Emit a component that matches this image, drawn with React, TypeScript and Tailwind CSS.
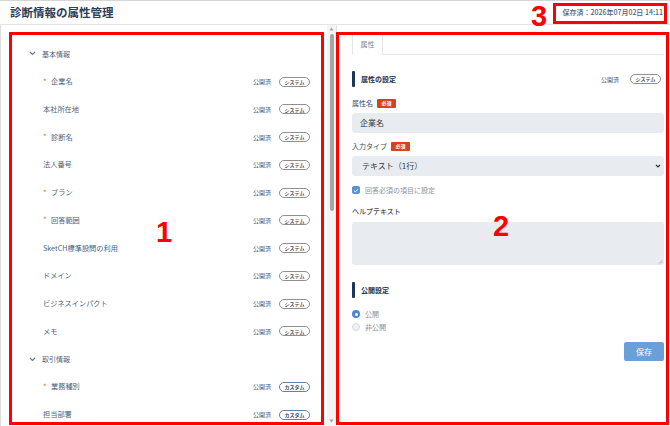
import * as React from "react";

type Attr = {
  name: string;
  required?: boolean;
  custom?: boolean;
};

type Group = {
  title: string;
  items: Attr[];
};

const groups: Group[] = [
  {
    title: "基本情報",
    items: [
      { name: "企業名", required: true },
      { name: "本社所在地" },
      { name: "診断名", required: true },
      { name: "法人番号" },
      { name: "プラン", required: true },
      { name: "回答範囲", required: true },
      { name: "SketCH標準設問の利用" },
      { name: "ドメイン" },
      { name: "ビジネスインパクト" },
      { name: "メモ" },
    ],
  },
  {
    title: "取引情報",
    items: [
      { name: "業務種別", required: true, custom: true },
      { name: "担当部署", custom: true },
    ],
  },
];

function Chevron() {
  return (
    <svg width="7" height="5" viewBox="0 0 7 5" className="text-[#6b7a90]">
      <path d="M1 1l2.5 2.5L6 1" fill="none" stroke="currentColor" strokeWidth="1.2" />
    </svg>
  );
}

function KindBadge({ custom }: { custom?: boolean }) {
  return custom ? (
    <span className="flex h-[10px] w-[31px] items-center justify-center rounded-full border border-[#5f7fae] bg-white text-[5px] font-bold text-[#2c4a7a]">
      カスタム
    </span>
  ) : (
    <span className="flex h-[10px] w-[31px] items-center justify-center rounded-full border border-[#8f8f8f] bg-white text-[5px] font-bold text-[#555]">
      システム
    </span>
  );
}

function RequiredTag() {
  return (
    <span className="ml-[4px] flex h-[9px] w-[19px] items-center justify-center rounded-[1px] bg-[#d4431a] text-[5px] font-bold text-white">
      必須
    </span>
  );
}

function SectionHeading({ title, right }: { title: string; right?: boolean }) {
  return (
    <div className="flex h-[16px] items-center pr-[3px]">
      <span className="h-[16px] w-[3px] rounded-[1px] bg-[#1f3458]" />
      <span className="ml-[6px] flex-1 text-[7px] font-bold text-[#1e2f4d]">{title}</span>
      {right && (
        <div className="flex items-center gap-[11px]">
          <span className="text-[6px] text-[#3d5272]">公開済</span>
          <KindBadge />
        </div>
      )}
    </div>
  );
}

function AttributeList() {
  return (
    <div className="flex-1 overflow-hidden pt-[15px] pr-[17px]">
      {groups.map((g) => (
        <div key={g.title}>
          <div className="flex h-[27.75px] items-center gap-[6px] pl-[28px]">
            <Chevron />
            <span className="text-[7px] text-[#4d5f7d]">{g.title}</span>
          </div>
          {g.items.map((it) => (
            <div key={it.name} className="flex h-[27.75px] items-center pl-[42px]">
              {it.required && <span className="w-[8px] text-[8px] leading-none text-[#e0703a]">*</span>}
              <span className="flex-1 text-[7.2px] text-[#4d5f7d]">{it.name}</span>
              <span className="mr-[8px] text-[6px] text-[#3d5272]">公開済</span>
              <KindBadge custom={it.custom} />
            </div>
          ))}
        </div>
      ))}
    </div>
  );
}

function FakeScrollbar() {
  return (
    <div className="flex w-[9px] flex-col items-center bg-[#f4f4f4]">
      <svg width="5" height="4" viewBox="0 0 5 4" className="mt-[2px]">
        <path d="M2.5 0.5L4.5 3.5H0.5z" fill="#a3a3a3" />
      </svg>
      <div className="mt-[3px] h-[177px] w-[4px] rounded-full bg-[#a6a6a6]" />
      <div className="flex-1" />
      <svg width="5" height="4" viewBox="0 0 5 4" className="mb-[3px]">
        <path d="M0.5 0.5H4.5L2.5 3.5z" fill="#a3a3a3" />
      </svg>
    </div>
  );
}

function AttributeForm() {
  return (
    <div className="flex flex-1 flex-col pl-[15px] pr-[6px] pt-[9px]">
      {/* tab strip */}
      <div className="flex h-[21px] border-b border-[#e6e6e6]">
        <div className="-mb-px flex w-[31px] items-center justify-center border border-b-white border-[#e6e6e6] bg-white text-[7px] text-[#7d8593]">
          属性
        </div>
      </div>

      <div className="mt-[16px]">
        <SectionHeading title="属性の設定" right />
      </div>

      <div className="mt-[11px] flex h-[10px] items-center">
        <span className="text-[7px] text-[#3e4b5f]">属性名</span>
        <RequiredTag />
      </div>
      <div className="mt-[5px] flex h-[20px] items-center rounded-[3px] bg-[#e8ebef] pl-[8px] text-[8px] text-[#333a45]">
        企業名
      </div>

      <div className="mt-[8px] flex h-[10px] items-center">
        <span className="text-[7px] text-[#3e4b5f]">入力タイプ</span>
        <RequiredTag />
      </div>
      <div className="mt-[5px] flex h-[20px] items-center justify-between rounded-[3px] bg-[#e8ebef] pl-[10px] pr-[3px] text-[8px] text-[#333a45]">
        <span>テキスト（1行）</span>
        <svg width="6" height="4" viewBox="0 0 6 4">
          <path d="M1 1l2 2 2-2" fill="none" stroke="#2d3748" strokeWidth="1.2" />
        </svg>
      </div>

      <div className="mt-[10px] flex h-[8px] items-center">
        <span className="flex h-[8px] w-[8px] items-center justify-center rounded-[2px] bg-[#5c8fd4]">
          <svg width="6" height="5" viewBox="0 0 6 5">
            <path d="M1 2.6l1.4 1.3L5 1.2" fill="none" stroke="white" strokeWidth="1" />
          </svg>
        </span>
        <span className="ml-[5px] text-[7px] text-[#8a93a1]">回答必須の項目に設定</span>
      </div>

      <div className="mt-[12px] flex h-[10px] items-center text-[7px] font-medium text-[#4a4f57]">
        ヘルプテキスト
      </div>
      <div className="relative mt-[6px] h-[43px] rounded-[3px] bg-[#e8ebef]">
        <svg width="5" height="5" viewBox="0 0 5 5" className="absolute bottom-[1px] right-[1px]">
          <path d="M4.5 1L1 4.5M4.5 3L3 4.5" stroke="#9aa0a8" strokeWidth="0.7" />
        </svg>
      </div>

      <div className="mt-[17px]">
        <SectionHeading title="公開設定" />
      </div>

      <div className="mt-[12px] flex h-[8px] items-center">
        <span className="flex h-[8px] w-[8px] items-center justify-center rounded-full bg-[#4a86d0]">
          <span className="h-[3px] w-[3px] rounded-full bg-white" />
        </span>
        <span className="ml-[5px] text-[7px] text-[#8a93a1]">公開</span>
      </div>
      <div className="mt-[5px] flex h-[8px] items-center">
        <span className="h-[8px] w-[8px] rounded-full border border-[#d5d9df] bg-[#eef0f3]" />
        <span className="ml-[5px] text-[7px] text-[#8a93a1]">非公開</span>
      </div>

      <div className="mt-[11px] flex justify-end">
        <button className="flex h-[19px] w-[40px] items-center justify-center rounded-[2px] bg-[#6a9fd8] text-[8px] text-white">
          保存
        </button>
      </div>
    </div>
  );
}

export default function App() {
  return (
    <div className="relative h-[426px] w-[670px] overflow-hidden border-t border-[#d6d6d6] bg-white font-['Noto_Sans_CJK_JP','Noto_Sans',sans-serif]">
      <header className="flex h-[24px] items-center justify-between border-b border-[#e4e4e4] pl-[10px] pr-[7px]">
        <h1 className="text-[11.5px] font-bold text-[#2c3e5c]">診断情報の属性管理</h1>
        <span className="text-[7px] font-medium text-[#4b5f7f]">保存済：2026年07月02日 14:11</span>
      </header>

      <div className="flex h-[401px]">
        <div className="flex w-[336px] border-l border-[#dcdcdc]">
          <AttributeList />
          <FakeScrollbar />
        </div>
        <div className="flex flex-1 border-l border-[#e4e4e4]">
          <AttributeForm />
        </div>
      </div>

      {/* numbered callouts */}
      <div className="pointer-events-none absolute left-[9px] top-[31px] h-[393px] w-[315px] border-[3px] border-[#ff0000]" />
      <div className="pointer-events-none absolute left-[336px] top-[31px] h-[393px] w-[333px] border-[3px] border-[#ff0000]" />
      <div className="pointer-events-none absolute left-[553px] top-[2px] h-[21px] w-[114px] border-[3px] border-[#ff0000]" />
      <span className="pointer-events-none absolute left-[531px] top-[1px] font-['Liberation_Sans',sans-serif] text-[29px] font-bold leading-none text-[#ff0000]">
        3
      </span>
      <span className="pointer-events-none absolute left-[156px] top-[217px] font-['Liberation_Sans',sans-serif] text-[29px] font-bold leading-none text-[#ff0000]">
        1
      </span>
      <span className="pointer-events-none absolute left-[493px] top-[211px] font-['Liberation_Sans',sans-serif] text-[29px] font-bold leading-none text-[#ff0000]">
        2
      </span>
    </div>
  );
}
